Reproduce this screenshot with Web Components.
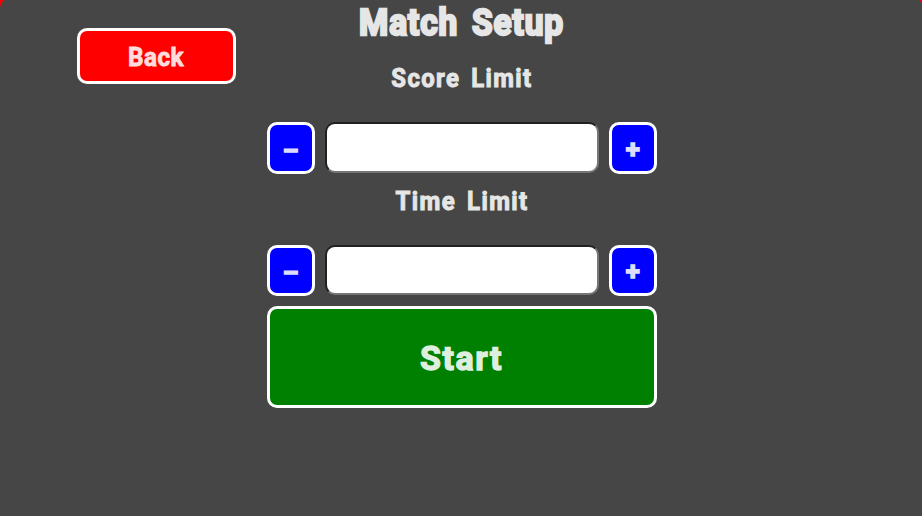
<!DOCTYPE html>
<html lang="en"><head><meta charset="utf-8"><title>Match Setup</title>
<style>html,body{margin:0;height:100%;overflow:hidden;background:#f00}</style></head>
<body><match-setup></match-setup>
<script>
class FitText extends HTMLElement {
  connectedCallback() {
    this.attachShadow({mode:'open'}).innerHTML = `<style>
      :host{display:block;white-space:nowrap;font-family:Roboto,sans-serif;font-weight:700;line-height:1}
      span{display:inline-block;-webkit-text-stroke:var(--stroke,1px) currentColor;stroke-linejoin:round;paint-order:stroke}
    </style><span><slot></slot></span>`;
    const span = this.shadowRoot.querySelector('span');
    const want = Number(this.getAttribute('width'));
    if (want) span.style.transform = `scaleX(${want / span.getBoundingClientRect().width})`;
  }
}
customElements.define('fit-text', FitText);

class GameButton extends HTMLElement {
  constructor() {
    super();
    this.attachShadow({mode:'open'}).innerHTML = `<style>
      :host{display:block;box-sizing:border-box}
      button{box-sizing:border-box;width:100%;height:100%;display:flex;align-items:center;justify-content:center;margin:0;padding:var(--pad,0);border:3px solid #fff;border-radius:10px;background:var(--fill);color:var(--ink)}
    </style><button><slot></slot></button>`;
  }
}
customElements.define('game-button', GameButton);

class NumberStepper extends HTMLElement {
  constructor() {
    super();
    this.attachShadow({mode:'open'}).innerHTML = `<style>
      :host{display:grid;grid-template-columns:48px 274px 48px;gap:10px;--fill:#00f;--ink:#ddf}
      game-button{height:100%}
      input{box-sizing:border-box;width:100%;height:calc(100% - .5px);margin:0;border:2px inset #767676;border-radius:10px;background:#fff}
      fit-text{font-size:25px;--stroke:1.4px}
      .minus{--pad:5px 1px 0 0}
      .plus{--pad:3px 0 0}
    </style>
    <game-button class="minus"><fit-text width="17">-</fit-text></game-button>
    <input type="text" aria-label="Limit">
    <game-button class="plus"><fit-text width="14">+</fit-text></game-button>`;
  }
}
customElements.define('number-stepper', NumberStepper);

class MatchSetup extends HTMLElement {
  constructor() {
    super();
    this.attachShadow({mode:'open'}).innerHTML = `<style>
      :host{display:block;box-sizing:border-box;height:calc(100% + 12px);margin:-2px 0 0;padding:2px 0 0;border-radius:10px 8px 0 0;background:#464646;color:#e6e6e6}
      main{display:grid;grid-template-columns:77px 159px 31px 390px;height:516px;align-items:start}
      .back{grid-column:2;margin-top:28px;height:56px;--fill:#f00;--ink:#fdd;--pad:2px 2px 0 0}
      section{grid-column:4;display:flex;flex-direction:column}
      section>fit-text{align-self:center}
      .title{font-size:36px;height:37px;margin-top:5px;--stroke:2.4px;word-spacing:5px;letter-spacing:1px}
      .label{font-size:26px;height:27px;word-spacing:4px;letter-spacing:1.5px;--stroke:1px}
      .score{margin-top:23px}
      .time{margin-top:14px}
      .one{height:52px;margin-top:29.5px}
      .two{height:51px;margin-top:30px}
      .start{height:102px;margin-top:10.5px;--fill:green;--ink:#dfefdf;--pad:2px 1px 0 0}
      .start fit-text{font-size:34px;letter-spacing:1.5px;--stroke:1.3px}
      .back fit-text{font-size:26px;letter-spacing:.5px;--stroke:.9px}
    </style><main>
      <game-button class="back"><fit-text width="56">Back</fit-text></game-button>
      <section>
        <fit-text class="title" width="205">Match Setup</fit-text>
        <fit-text class="label score" width="141">Score Limit</fit-text>
        <number-stepper class="one"></number-stepper>
        <fit-text class="label time" width="133">Time Limit</fit-text>
        <number-stepper class="two"></number-stepper>
        <game-button class="start"><fit-text width="83">Start</fit-text></game-button>
      </section></main>`;
  }
}
customElements.define('match-setup', MatchSetup);
</script></body></html>
